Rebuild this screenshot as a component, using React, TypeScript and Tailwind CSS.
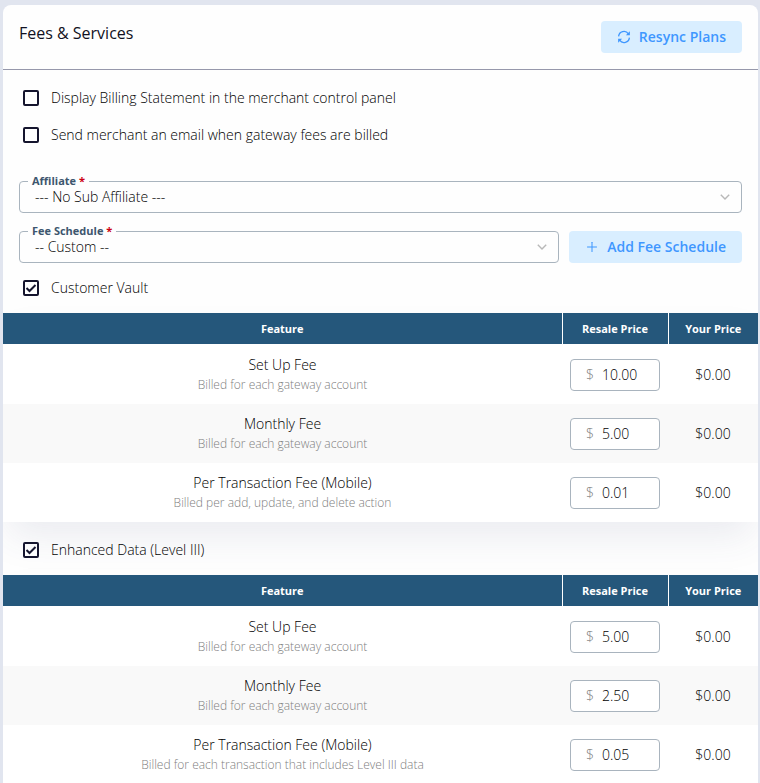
import { useId, useState } from "react";
import type { ReactNode } from "react";
import { AiOutlinePlus } from "react-icons/ai";

interface Fee {
  name: string;
  desc: string;
  resale: string;
  yours: string;
}

interface Service {
  name: string;
  fees: Fee[];
}

const services: Service[] = [
  {
    name: "Customer Vault",
    fees: [
      { name: "Set Up Fee", desc: "Billed for each gateway account", resale: "10.00", yours: "$0.00" },
      { name: "Monthly Fee", desc: "Billed for each gateway account", resale: "5.00", yours: "$0.00" },
      { name: "Per Transaction Fee (Mobile)", desc: "Billed per add, update, and delete action", resale: "0.01", yours: "$0.00" },
    ],
  },
  {
    name: "Enhanced Data (Level III)",
    fees: [
      { name: "Set Up Fee", desc: "Billed for each gateway account", resale: "5.00", yours: "$0.00" },
      { name: "Monthly Fee", desc: "Billed for each gateway account", resale: "2.50", yours: "$0.00" },
      { name: "Per Transaction Fee (Mobile)", desc: "Billed for each transaction that includes Level III data", resale: "0.05", yours: "$0.00" },
    ],
  },
];

function SyncIcon() {
  return (
    <svg viewBox="0 0 14 14" className="size-3.5 fill-none stroke-current" aria-hidden="true">
      <path d="M1.6 6.4 A5.4 5.4 0 0 1 11.4 3.8" strokeWidth="1.3" />
      <path d="M12.4 7.6 A5.4 5.4 0 0 1 2.6 10.2" strokeWidth="1.3" />
      <path d="M12.9 1.2 V5.2 H8.9 Z" className="fill-current stroke-none" />
      <path d="M1.1 12.8 V8.8 H5.1 Z" className="fill-current stroke-none" />
    </svg>
  );
}

function Checkbox({ label, defaultChecked = false }: { label: string; defaultChecked?: boolean }) {
  return (
    <label className="flex items-center gap-3 cursor-pointer">
      <span className="grid shrink-0 place-items-center">
        <input
          type="checkbox"
          defaultChecked={defaultChecked}
          className="peer col-start-1 row-start-1 size-4 appearance-none rounded-xs border-2 border-[#15152e] bg-white"
        />
        <svg
          viewBox="0 0 16 16"
          className="col-start-1 row-start-1 size-4 fill-none stroke-[#15152e] stroke-2 opacity-0 pointer-events-none peer-checked:opacity-100"
        >
          <path d="M3.5 8 L6.5 11 L12.5 5" />
        </svg>
      </span>
      {label}
    </label>
  );
}

function SelectField({ label, value }: { label: string; value: string }) {
  const id = useId();

  return (
    <fieldset className="min-w-0 flex-1 rounded-sm border border-[#a9b4be] px-2">
      <legend className="px-1 text-[11px] leading-4 font-bold text-[#3d566e]">
        <label htmlFor={id}>
          {label} <span className="text-[#cc0011]">*</span>
        </label>
      </legend>
      <div className="relative pb-2">
        <select id={id} className="block h-[15px] w-full appearance-none bg-transparent pl-[7px] leading-[15px] outline-none">
          <option>{value}</option>
        </select>
        <svg
          viewBox="0 0 10 6"
          className="absolute right-[3px] top-[5px] h-1.5 w-2.5 fill-none stroke-[#b8b8b8] pointer-events-none"
        >
          <path d="M0.8 0.8 L5 5 L9.2 0.8" strokeWidth="1.4" />
        </svg>
      </div>
    </fieldset>
  );
}

function ActionButton({ icon, children }: { icon: ReactNode; children: ReactNode }) {
  return (
    <button
      type="button"
      className="flex h-8 shrink-0 items-center gap-2 rounded-sm bg-[#d9eeff] px-4 font-semibold text-[#3f97ff] hover:bg-[#c8e5ff]"
    >
      {icon}
      {children}
    </button>
  );
}

function PriceInput({ label, initial }: { label: string; initial: string }) {
  const [value, setValue] = useState(initial);

  return (
    <label className="flex h-8 items-center gap-2 rounded-sm border border-[#a9b4be] bg-white px-[15px] focus-within:border-[#3f97ff]">
      <span className="text-[#808080]">$</span>
      <input
        type="text"
        aria-label={label}
        value={value}
        onChange={(e) => setValue(e.target.value)}
        className="w-full min-w-0 bg-transparent outline-none"
      />
    </label>
  );
}

function FeeTable({ service }: { service: Service }) {
  return (
    <table className="relative w-full table-fixed bg-white text-center shadow-[0_20px_36px_-6px_rgba(62,73,120,0.1)]">
      <colgroup>
        <col />
        <col className="w-[106px]" />
        <col className="w-[90px]" />
      </colgroup>
      <thead>
        <tr className="h-[31px] bg-[#25577b] text-[11px] text-white *:font-bold">
          <th scope="col">Feature</th>
          <th scope="col" className="border-l border-white">Resale Price</th>
          <th scope="col" className="border-l border-white">Your Price</th>
        </tr>
      </thead>
      <tbody>
        {service.fees.map((fee) => (
          <tr key={fee.name} className="h-[59px] first:h-[60px] first:*:pt-px even:bg-[#f9f9f9]">
            <td>
              <div className="leading-5">{fee.name}</div>
              <div className="text-xs leading-5 text-[#808080]">{fee.desc}</div>
            </td>
            <td className="px-2">
              <PriceInput label={`${service.name} ${fee.name} resale price`} initial={fee.resale} />
            </td>
            <td>{fee.yours}</td>
          </tr>
        ))}
      </tbody>
    </table>
  );
}

export default function App() {
  return (
    <div className="min-h-screen bg-[#e1e5ef] pt-[5px] pr-0.5 pl-[3px] font-['Open_Sans',sans-serif] text-sm font-light text-black">
      <main className="overflow-hidden rounded-t-lg bg-[#fefefe]">
        {/* Header */}
        <header className="flex items-start justify-between border-b border-[#9698ab] p-4">
          <h1 className="text-base leading-6 font-normal text-[#111122]">Fees &amp; Services</h1>
          <ActionButton icon={<SyncIcon />}>Resync Plans</ActionButton>
        </header>

        {/* Billing options */}
        <div className="flex flex-col gap-[17px] px-5 pt-[18px] leading-5">
          <Checkbox label="Display Billing Statement in the merchant control panel" />
          <Checkbox label="Send merchant an email when gateway fees are billed" />
        </div>

        <div className="mt-7 flex flex-col gap-2.5 px-4">
          <SelectField label="Affiliate" value="--- No Sub Affiliate ---" />
          <div className="flex items-end gap-2.5">
            <SelectField label="Fee Schedule" value="-- Custom --" />
            <ActionButton icon={<AiOutlinePlus className="size-3.5" />}>Add Fee Schedule</ActionButton>
          </div>
        </div>

        {/* Services */}
        {services.map((service) => (
          <section key={service.name} className="not-first-of-type:pt-[3px]">
            <div className="flex h-[50px] items-center px-5">
              <Checkbox label={service.name} defaultChecked />
            </div>
            <FeeTable service={service} />
          </section>
        ))}
      </main>
    </div>
  );
}
